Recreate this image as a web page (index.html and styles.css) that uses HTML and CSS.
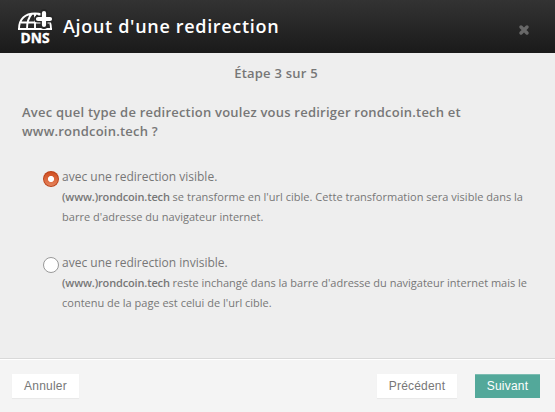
FILE: index.html
```html
<!DOCTYPE html>
<html lang="fr"><head><meta charset="utf-8"><title>Ajout d'une redirection</title><link rel="stylesheet" href="styles.css"></head>
<body><div class="modal">
<header class="header">
<svg class="logo" width="36" height="36" viewBox="0 0 36 36"><g fill="none" stroke="#fff" stroke-width="1.900"><path d="M1 18C1 8 7 2.500 17 2.500S33 8 33 18M0 18h34M3 11.500h28M17 2.500v15M9 18Q9 8 14 2.500M25 18Q25 8 20 2.500"/></g><path d="M26 1.500v13M19.500 8h13" stroke="#262626" stroke-width="7" stroke-linecap="round"/><path d="M26 2v12M20 8h12" stroke="#fff" stroke-width="4.200" stroke-linecap="round"/><text x="2.500" y="31.500" class="logo-text" textLength="29" lengthAdjust="spacingAndGlyphs">DNS</text></svg>
<h1 class="title">Ajout d'une redirection</h1><button class="close" aria-label="Fermer"><svg width="12" height="12" viewBox="0 0 12 12"><path d="M3 3l6 6M9 3l-6 6" stroke="#686868" stroke-width="3.500" stroke-linecap="round"/></svg></button></header>
<main class="content"><div class="step">Étape 3 sur 5</div>
<p class="question">Avec quel type de redirection voulez vous rediriger rondcoin.tech et<br>www.rondcoin.tech ?</p>
<div class="option"><span class="radio checked"></span><div><div class="label">avec une redirection visible.</div><p class="help visible"><b>(www.)rondcoin.tech</b> se transforme en l'url cible. Cette transformation sera visible dans la<br>barre d'adresse du navigateur internet.</p></div></div>
<div class="option"><span class="radio"></span><div><div class="label">avec une redirection invisible.</div><p class="help"><b>(www.)rondcoin.tech</b> reste inchangé dans la barre d'adresse du navigateur internet mais le<br>contenu de la page est celui de l'url cible.</p></div></div>
</main><footer class="footer"><button class="btn cancel">Annuler</button><button class="btn previous">Précédent</button><button class="btn next">Suivant</button></footer>
</div></body></html>
```
FILE: styles.css
```css
*{box-sizing:border-box}
body{margin:0;font-family:"Open Sans",sans-serif;color:#777}
.modal{height:412px;display:flex;flex-direction:column;background:#eee}
.header{height:53px;background:linear-gradient(#333,#1a1a1a);display:flex;align-items:center;padding:0 25px 0 18px}
.logo{margin-top:5px;flex:none;overflow:visible}
.logo-text{font:bold 14.5px "Open Sans",sans-serif;fill:#fff;stroke:#fff;stroke-width:.4px}
.title{margin:-1px auto 0 9px;font-size:18px;font-weight:600;letter-spacing:.68px;color:#fff;white-space:nowrap}
.close{border:0;background:none;padding:0;display:flex;margin-top:7px}
.content{flex:1;padding:11px 22px 0;white-space:nowrap}
.step{text-align:center;padding-right:3px;font-size:13px;line-height:19px;font-weight:600;letter-spacing:.22px}
.question{margin:20px 0 26px;font-size:13px;line-height:19px;font-weight:600;letter-spacing:.22px}
.option{display:flex;margin-left:21px;height:86px}
.radio{width:16px;height:16px;border:1px solid #999;border-radius:50%;background:#fff;margin:4px 3px 0 0;flex:none}
.checked{border:0;background:radial-gradient(circle,#fff 2.7px,transparent 3.4px),linear-gradient(#cf4a1c,#e6865f);box-shadow:inset 0 0 0 1px #b9431b}
.label{font-size:12px;line-height:20px}
.help{margin:0;font-size:11px;line-height:20px}
.help b{font-weight:600;letter-spacing:-.15px}
.visible{letter-spacing:.02px}
.footer{height:54px;flex:none;border-top:1px solid #d9d9d9;box-shadow:inset 0 1px #fff;background:#f4f4f4;display:flex;align-items:center;padding:0 15px 0 12px}
.btn{border:0;height:24px;padding:0;background:#fff;color:#777;font:12px "Liberation Sans",sans-serif;letter-spacing:.2px;box-shadow:0 1px 1px #e9e9e9}
.cancel{width:67px;margin-right:auto}
.previous{width:80px;margin-right:18px}
.next{width:65px;background:#53a89a;color:#fff;box-shadow:inset 0 1px #7bbcb1}
```
